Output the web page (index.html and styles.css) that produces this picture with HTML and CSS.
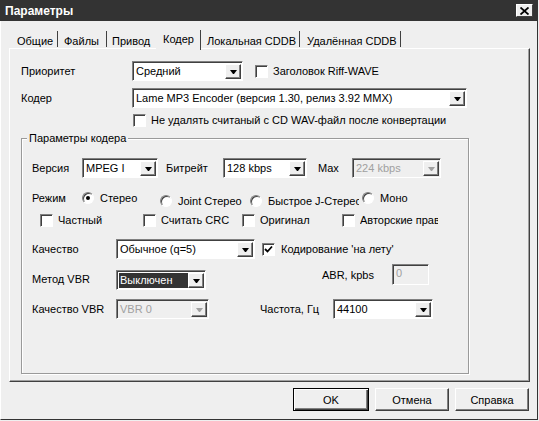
FILE: index.html
```html
<!DOCTYPE html>
<html>
<head>
<meta charset="utf-8">
<title>Параметры</title>
<link rel="stylesheet" href="styles.css">
</head>
<body>
<div class="window">
  <div class="titlebar">
    <span class="title">Параметры</span>
    <span class="close"><svg width="9" height="8" viewBox="0 0 9 8"><path d="M0.5 0.5 L8.5 7.5 M8.5 0.5 L0.5 7.5" stroke="#000" stroke-width="1.8" fill="none"/></svg></span>
  </div>
  <div class="tabs">
    <div class="tab tw1">Общие</div>
    <div class="tab tw2">Файлы</div>
    <div class="tab tw3 noborder">Привод</div>
    <div class="tab tab-sel">Кодер</div>
    <div class="tab tw5">Локальная CDDB</div>
    <div class="tab tw6">Удалённая CDDB</div>
  </div>
  <div class="panel">
    <div class="row r1">
      <span class="lbl lw111">Приоритет</span>
      <div class="combo cw-prio"><span class="val">Средний</span><span class="arrow"><i></i></span></div>
      <span class="cb cb-riff"></span>
      <span class="cbtext">Заголовок Riff-WAVE</span>
    </div>
    <div class="row r2">
      <span class="lbl lw111">Кодер</span>
      <div class="combo cw-enc"><span class="val">Lame MP3 Encoder (версия 1.30, релиз 3.92 MMX)</span><span class="arrow"><i></i></span></div>
    </div>
    <div class="row r3">
      <span class="cb"></span>
      <span class="cbtext">Не удалять считаный с CD WAV-файл после конвертации</span>
    </div>
    <div class="group">
      <span class="legend">Параметры кодера</span>
      <div class="row ra">
        <span class="lbl lw50">Версия</span>
        <div class="combo cw-ver"><span class="val">MPEG I</span><span class="arrow"><i></i></span></div>
        <span class="lbl lw-bit">Битрейт</span>
        <div class="combo cw-bit"><span class="val">128 kbps</span><span class="arrow"><i></i></span></div>
        <span class="lbl lw-max">Max</span>
        <div class="combo cw-max disabled"><span class="val">224 kbps</span><span class="arrow"><i></i></span></div>
      </div>
      <div class="row rb">
        <span class="lbl lw50 opt">Режим</span>
        <span class="opt ow1"><span class="radio on"></span><span class="otext">Стерео</span></span>
        <span class="opt ow2 low"><span class="radio"></span><span class="otext">Joint Стерео</span></span>
        <span class="opt ow3 low"><span class="radio"></span><span class="otext clip3">Быстрое J-Стерео</span></span>
        <span class="opt"><span class="radio"></span><span class="otext">Моно</span></span>
      </div>
      <div class="row rc">
        <span class="opt cw1"><span class="cb"></span><span class="cbtext">Частный</span></span>
        <span class="opt cw2"><span class="cb"></span><span class="cbtext">Считать CRC</span></span>
        <span class="opt cw3"><span class="cb"></span><span class="cbtext">Оригинал</span></span>
        <span class="opt"><span class="cb"></span><span class="cbtext clip4">Авторские права</span></span>
      </div>
      <div class="row rd">
        <span class="lbl lw84">Качество</span>
        <div class="combo cw-q"><span class="val">Обычное (q=5)</span><span class="arrow"><i></i></span></div>
        <span class="cb checked cb-fly"><svg width="9" height="9" viewBox="0 0 9 9"><path d="M1 4 L3.5 6.5 L8 1.5" stroke="#000" stroke-width="1.8" fill="none"/></svg></span>
        <span class="cbtext fly">Кодирование 'на лету'</span>
      </div>
      <div class="row re">
        <span class="lbl lw84">Метод VBR</span>
        <div class="combo cw-vbr"><span class="val"><span class="hl">Выключен</span></span><span class="arrow"><i></i></span></div>
        <span class="lbl lw-abr">ABR, kpbs</span>
        <div class="edit disabled"><span class="val">0</span></div>
      </div>
      <div class="row rf">
        <span class="lbl lw84">Качество VBR</span>
        <div class="combo cw-vq disabled"><span class="val">VBR 0</span><span class="arrow"><i></i></span></div>
        <span class="lbl lw-freq">Частота, Гц</span>
        <div class="combo cw-freq"><span class="val">44100</span><span class="arrow"><i></i></span></div>
      </div>
    </div>
  </div>
  <div class="buttons">
    <div class="btn default"><span>OK</span></div>
    <div class="btn b2"><span>Отмена</span></div>
    <div class="btn b3"><span>Справка</span></div>
  </div>
</div>
</body>
</html>
```
FILE: styles.css
```css
html, body {
  margin: 0;
  padding: 0;
  background: #efefef;
}
body {
  font-family: "Liberation Sans", Arial, sans-serif;
  font-size: 11px;
  color: #000;
}
.window {
  width: 538px;
  height: 420px;
  box-sizing: border-box;
  border-right: 1px solid #333;
  border-bottom: 1px solid #333;
  border-left: 1px solid #fff;
  background: #efefef;
}
.titlebar {
  height: 21px;
  background: #333;
  display: flex;
  align-items: center;
  justify-content: space-between;
  margin-left: -1px;
}
.title {
  color: #fff;
  font-weight: bold;
  font-size: 12px;
  padding-left: 5px;
}
.close {
  width: 17px;
  height: 13px;
  box-sizing: border-box;
  background: #efefef;
  border: 1px solid;
  border-color: #fff #404040 #404040 #fff;
  margin-right: 4px;
  display: flex;
  align-items: center;
  justify-content: center;
}
.tabs {
  height: 27px;
  display: flex;
  align-items: flex-end;
  padding-left: 9px;
}
.tab {
  height: 16px;
  box-sizing: border-box;
  border-right: 1px solid #404040;
  padding-left: 6px;
  padding-top: 4px;
  line-height: 13px;
  margin-bottom: 1px;
  white-space: nowrap;
}
.tw1 { width: 48px; padding-left: 7px; }
.tw2 { width: 49px; }
.tw3 { width: 49px; padding-left: 5px; border-right: none; }
.tab-sel {
  width: 45px;
  height: 20px;
  margin-bottom: -2px;
  padding-left: 7px;
  padding-top: 3px;
  position: relative;
  z-index: 1;
  background: #efefef;
}
.tw5 { width: 99px; }
.tw6 { width: 101px; padding-left: 7px; }

.panel {
  margin-left: 8px;
  width: 521px;
  height: 334px;
  box-sizing: border-box;
  border: 1px solid;
  border-color: #fff #404040 #404040 #fff;
  box-shadow: inset -1px -1px #a0a0a0;
  padding-left: 11px;
  padding-top: 12px;
}
.row {
  display: flex;
  align-items: center;
}
.lbl { white-space: nowrap; flex: none; }
.lw111 { width: 111px; }
.lw50 { width: 50px; }
.lw84 { width: 84px; }
.lw-bit { width: 57px; margin-left: 8px; }
.lw-max { width: 34px; margin-left: 11px; }
.lw-abr { width: 70px; margin-left: 116px; }
.lw-freq { width: 73px; margin-left: 51px; }

.r1 { height: 20px; }
.r2 { height: 20px; margin-top: 7px; }
.r3 { height: 14px; margin-top: 5px; padding-left: 112px; }

.combo {
  display: flex;
  height: 20px;
  box-sizing: border-box;
  background: #fff;
  border: 1px solid;
  border-color: #808080 #fff #fff #808080;
  box-shadow: inset 1px 1px #404040;
  padding: 2px 1px 1px 2px;
  flex: none;
}
.combo .val {
  flex: 1;
  padding-left: 1px;
  line-height: 15px;
  white-space: nowrap;
  overflow: hidden;
}
.arrow {
  width: 16px;
  height: 15px;
  box-sizing: border-box;
  background: #efefef;
  border: 1px solid;
  border-color: #fff #404040 #404040 #fff;
  box-shadow: inset -1px -1px #808080;
  display: flex;
  align-items: center;
  justify-content: center;
  flex: none;
}
.arrow i {
  display: block;
  width: 1px;
  height: 0;
  border-left: 3px solid transparent;
  border-right: 3px solid transparent;
  border-top: 4px solid #000;
  margin-top: 1px;
}
.combo.disabled { background: #efefef; }
.combo.disabled .val { color: #a0a0a0; }
.combo.disabled .arrow i { border-top-color: #a0a0a0; }

.cw-prio { width: 111px; }
.cw-enc { width: 335px; }
.cw-ver { width: 76px; }
.cw-bit { width: 84px; }
.cw-max { width: 89px; }
.cw-q { width: 139px; }
.cw-vbr { width: 90px; align-self: flex-start; margin-top: 6px; }
.cw-vq { width: 93px; }
.cw-freq { width: 100px; }

.hl {
  display: inline-block;
  background: #333;
  color: #fff;
  padding: 0 2px 0 1px;
  width: 68px;
  margin-left: -1px;
}

.cb {
  width: 13px;
  height: 13px;
  box-sizing: border-box;
  border: 1px solid;
  border-color: #808080 #fff #fff #808080;
  box-shadow: inset 1px 1px #404040;
  background: #fff;
  flex: none;
  display: flex;
  align-items: center;
  justify-content: center;
}
.cbtext { margin-left: 5px; white-space: nowrap; }
.cb-riff { margin-left: 12px; }
.r1 .cbtext { margin-left: 5px; }
.cb-fly { margin-left: 7px; }
.fly { margin-left: 6px; }

.group {
  position: relative;
  width: 448px;
  height: 236px;
  box-sizing: border-box;
  margin-top: 11px;
  border: 1px solid #9a9a9a;
  box-shadow: inset 1px 1px #fff, 1px 1px #fff;
  padding-left: 10px;
  padding-top: 19px;
}
.legend {
  position: absolute;
  top: -8px;
  left: 5px;
  padding: 0 2px;
  background: #efefef;
  line-height: 14px;
}
.ra { height: 20px; }
.rb { height: 16px; margin-top: 11px; align-items: flex-start; }
.rc { height: 16px; margin-top: 7px; padding-left: 8px; }
.rd { height: 20px; margin-top: 11px; }
.re { height: 22px; margin-top: 5px; align-items: center; }
.re .lbl:first-child { align-self: flex-start; margin-top: 9px; }
.rf { height: 20px; margin-top: 13px; }

.opt {
  display: flex;
  align-items: center;
  flex: none;
  height: 14px;
}
.rb .opt { margin-top: 2px; }
.rb .opt.low { margin-top: 5px; }
.ow1 { width: 78px; }
.ow2 { width: 90px; }
.ow3 { width: 112px; }
.otext { margin-left: 6px; white-space: nowrap; }
.clip3 { width: 91px; overflow: hidden; }
.clip4 { width: 78px; overflow: hidden; }
.cw1 { width: 103px; }
.cw2 { width: 99px; }
.cw3 { width: 100px; }

.radio {
  width: 12px;
  height: 12px;
  box-sizing: border-box;
  border-radius: 50%;
  border: 1px solid;
  border-color: #808080 #fff #fff #808080;
  box-shadow: inset 1px 1px #404040;
  background: #fff;
  position: relative;
  flex: none;
}
.radio.on::after {
  content: "";
  position: absolute;
  left: 3px;
  top: 3px;
  width: 4px;
  height: 4px;
  border-radius: 50%;
  background: #000;
}

.edit {
  width: 37px;
  height: 21px;
  box-sizing: border-box;
  border: 1px solid;
  border-color: #808080 #fff #fff #808080;
  box-shadow: inset 1px 1px #404040;
  padding: 2px 0 0 3px;
  flex: none;
  align-self: flex-start;
}
.edit.disabled { background: #efefef; color: #a0a0a0; }

.buttons {
  display: flex;
  margin-top: 6px;
  padding-left: 292px;
}
.btn {
  width: 74px;
  height: 23px;
  box-sizing: border-box;
  border: 1px solid;
  border-color: #fff #404040 #404040 #fff;
  box-shadow: inset -1px -1px #808080;
  display: flex;
  align-items: center;
  justify-content: center;
  flex: none;
}
.btn.default {
  width: 76px;
  border: 1px solid #000;
  box-shadow: inset 1px 1px #fff, inset -1px -1px #404040, inset -2px -2px #808080;
}
.b2 { margin-left: 6px; }
.b3 { margin-left: 6px; }
```
